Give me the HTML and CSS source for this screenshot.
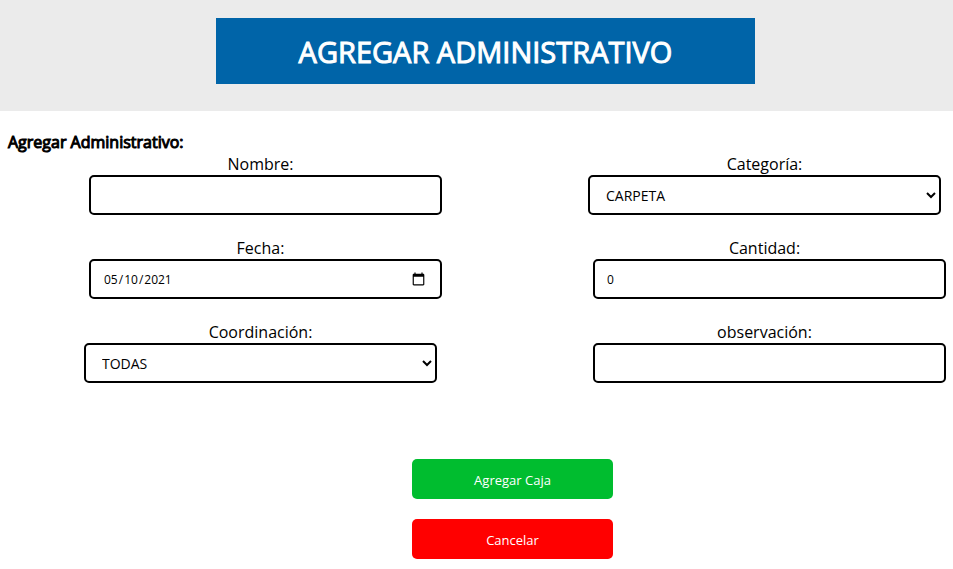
FILE: index.html
```html
<!DOCTYPE html>
<html lang="es">
<head>
<meta charset="utf-8">
<title>Agregar Administrativo</title>
<link rel="stylesheet" href="styles.css">
</head>
<body>
<header class="banner">
  <h1 class="banner-title">AGREGAR ADMINISTRATIVO</h1>
</header>
<main>
  <h2 class="form-title">Agregar Administrativo:</h2>
  <form class="form">
    <div class="fields">
      <div class="field">
        <label for="nombre">Nombre:</label>
        <input class="control" type="text" id="nombre">
      </div>
      <div class="field">
        <label for="categoria">Categoría:</label>
        <select class="control" id="categoria"><option>CARPETA</option></select>
      </div>
      <div class="field">
        <label for="fecha">Fecha:</label>
        <input class="control" type="date" id="fecha" value="2021-05-10">
      </div>
      <div class="field">
        <label for="cantidad">Cantidad:</label>
        <input class="control" type="number" id="cantidad" value="0">
      </div>
      <div class="field">
        <label for="coordinacion">Coordinación:</label>
        <select class="control" id="coordinacion"><option>TODAS</option></select>
      </div>
      <div class="field">
        <label for="observacion">observación:</label>
        <input class="control" type="text" id="observacion">
      </div>
    </div>
    <div class="actions">
      <button class="button button-add" type="button">Agregar Caja</button>
      <button class="button button-cancel" type="button">Cancelar</button>
    </div>
  </form>
</main>
</body>
</html>
```
FILE: styles.css
```css
* {
  box-sizing: border-box;
}

body {
  margin: 0;
  background: #fff;
  color: #000;
  font-family: "Open Sans", sans-serif;
  font-size: 16px;
  font-weight: 400;
  line-height: 22px;
}

.banner {
  padding: 18px 198px 27px 216px;
  background: #ebebeb;
}

.banner-title {
  margin: 0;
  padding: 14px 0 12px;
  background: #0064a8;
  color: #fff;
  font-size: 29px;
  font-weight: 400;
  line-height: 40px;
  text-align: center;
  -webkit-text-stroke: 1px #fff;
}

.form-title {
  margin: 20px 8px 0;
  font-size: 16px;
  font-weight: 400;
  -webkit-text-stroke: 1px #000;
}

.form {
  padding: 0 12px 10px 84px;
}

.fields {
  display: grid;
  grid-template-columns: 1fr 1fr;
  gap: 22px 151px;
}

.field {
  display: flex;
  flex-direction: column;
  text-align: center;
}

.control {
  height: 40px;
  border: 2px solid #000;
  border-radius: 5px;
  background: #fff;
  color: #000;
  font-family: inherit;
  font-weight: 400;
}

input.control {
  margin: 0 -5px 0 5px;
  padding: 0 12px;
  font-size: 12px;
}

.control::-webkit-calendar-picker-indicator {
  width: 15px;
  height: 15px;
}

select.control {
  margin: 0;
  padding: 1px 1px 0 12px;
  font-size: 14px;
}

.actions {
  display: flex;
  flex-direction: column;
  align-items: center;
  gap: 20px;
  margin-top: 76px;
}

.button {
  width: 201px;
  height: 40px;
  padding: 2px 0 0;
  border: 0;
  border-radius: 5px;
  color: #fff;
  font-family: inherit;
  font-size: 13px;
  font-weight: 400;
}

.button-add {
  background: #00bd2f;
}

.button-cancel {
  background: #f00;
}
```
